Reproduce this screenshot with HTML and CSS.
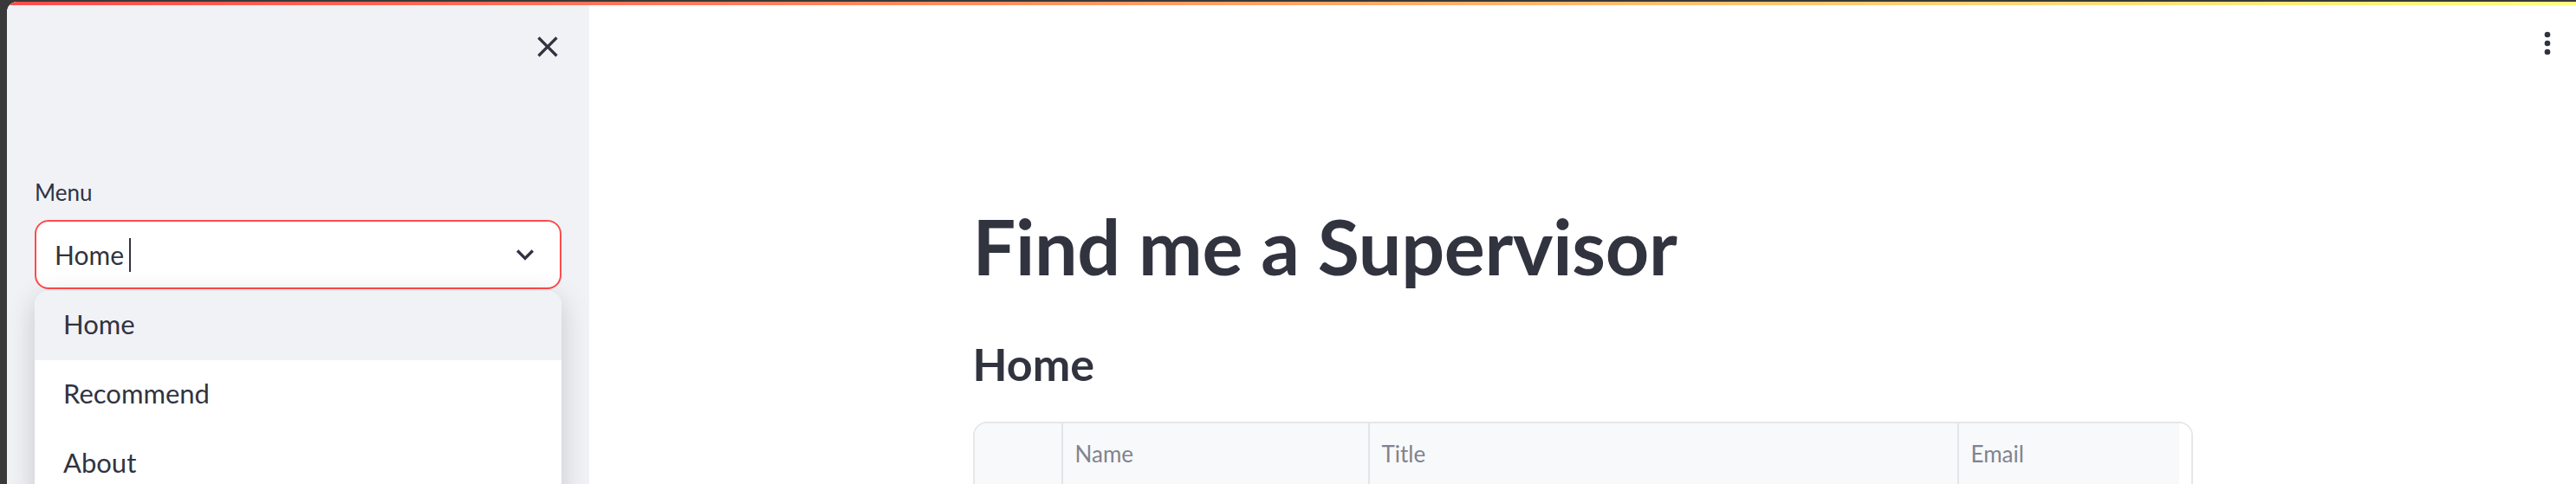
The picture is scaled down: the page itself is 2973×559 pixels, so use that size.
FILE: index.html
```html
<!DOCTYPE html>
<html lang="en">
<head>
<meta charset="utf-8">
<title>Find me a Supervisor</title>
<link rel="stylesheet" href="styles.css">
</head>
<body>
<div class="frame">
  <div class="viewport">
    <div class="decoration"></div>
    <aside class="sidebar">
      <div class="sidebar-header">
        <button class="icon-btn" aria-label="Close sidebar">
          <svg viewBox="0 0 24 24" width="40" height="40"><path fill="#31333f" d="M19 6.41L17.59 5 12 10.59 6.41 5 5 6.41 10.59 12 5 17.59 6.41 19 12 13.41 17.59 19 19 17.59 13.41 12z"/></svg>
        </button>
      </div>
      <div class="sidebar-content">
        <label class="widget-label">Menu</label>
        <div class="select-wrap">
          <div class="select">
            <span class="select-value">Home</span><span class="caret"></span>
            <span class="select-spacer"></span>
            <svg class="chevron" viewBox="0 0 24 24" width="40" height="40"><path fill="#31333f" d="M16.59 8.59L12 13.17 7.41 8.59 6 10l6 6 6-6z"/></svg>
          </div>
          <ul class="dropdown">
            <li class="option active">Home</li>
            <li class="option">Recommend</li>
            <li class="option">About</li>
          </ul>
        </div>
      </div>
    </aside>
    <main class="main">
      <div class="toolbar">
        <button class="icon-btn" aria-label="Main menu">
          <svg viewBox="0 0 24 24" width="40" height="40"><circle cx="12" cy="6" r="2" fill="#31333f"/><circle cx="12" cy="12" r="2" fill="#31333f"/><circle cx="12" cy="18" r="2" fill="#31333f"/></svg>
        </button>
      </div>
      <div class="block">
        <h1 class="title">Find me a Supervisor</h1>
        <h2 class="subtitle">Home</h2>
        <div class="table">
          <div class="thead">
            <div class="th index"></div>
            <div class="th">Name</div>
            <div class="th">Title</div>
            <div class="th">Email</div>
            <div class="th filler"></div>
          </div>
        </div>
      </div>
    </main>
  </div>
</div>
</body>
</html>
```
FILE: styles.css
```css
* { box-sizing: border-box; }
html, body { margin: 0; padding: 0; }
body {
  background: #393939;
  font-family: Lato, "Liberation Sans", sans-serif;
  color: #31333f;
  overflow: hidden;
}
.frame {
  padding: 2px 0 0 8px;
  height: 559px;
}
.viewport {
  position: relative;
  display: flex;
  height: 557px;
  background: #ffffff;
  border-top-left-radius: 12px;
  overflow: hidden;
}
.decoration {
  position: absolute;
  top: 0;
  left: 0;
  right: 0;
  height: 4px;
  background: linear-gradient(90deg, #ff4b4b, #fffd80);
  z-index: 5;
}
.icon-btn {
  width: 40px;
  height: 40px;
  padding: 0;
  border: 0;
  background: transparent;
  display: flex;
}
.sidebar {
  width: 672px;
  flex: 0 0 672px;
  background: #f0f2f6;
  display: flex;
  flex-direction: column;
}
.sidebar-header {
  display: flex;
  justify-content: flex-end;
  padding: 32px 28px 0 0;
}
.sidebar-content {
  padding: 134px 32px 0 32px;
}
.widget-label {
  display: block;
  font-size: 26px;
  line-height: 28px;
  height: 28px;
  margin-bottom: 18px;
  color: #31333f;
}
.select-wrap {
  position: relative;
}
.select {
  display: flex;
  align-items: center;
  height: 80px;
  background: #ffffff;
  border: 2px solid #ff4b4b;
  border-radius: 16px;
  padding: 0 20px 0 21px;
  font-size: 30px;
}
.select-value { line-height: 40px; }
.caret {
  width: 2px;
  height: 39px;
  margin-left: 6px;
  background: #31333f;
}
.select-spacer { flex: 1; }
.chevron { display: block; }
.dropdown {
  position: absolute;
  top: calc(100% + 2px);
  left: 0;
  right: 0;
  margin: 0;
  padding: 0;
  list-style: none;
  background: #ffffff;
  border-radius: 16px 16px 0 0;
  box-shadow: 0 8px 32px rgba(0, 0, 0, 0.18);
  overflow: hidden;
  z-index: 4;
}
.option {
  height: 80px;
  line-height: 76px;
  padding: 0 0 4px 33px;
  font-size: 31px;
  color: #31333f;
}
.option.active { background: #f0f2f6; }
.main {
  flex: 1;
  min-width: 0;
  display: flex;
  flex-direction: column;
}
.toolbar {
  display: flex;
  justify-content: flex-end;
  padding: 28px 13px 0 0;
}
.block {
  width: 100%;
  max-width: 1472px;
  margin: 0 auto;
  padding: 161px 32px 0 32px;
}
.title {
  margin: 0;
  font-size: 88px;
  line-height: 106px;
  font-weight: 700;
  letter-spacing: -0.3px;
  color: #31333f;
}
.subtitle {
  margin: 49px 0 0 0;
  font-size: 52px;
  line-height: 68px;
  font-weight: 700;
  color: #31333f;
}
.table {
  margin-top: 33px;
  height: 200px;
  border: 2px solid #e6e7ea;
  border-radius: 16px;
  overflow: hidden;
}
.thead {
  display: grid;
  grid-template-columns: 100px 354px 680px 256px 1fr;
  height: 70px;
}
.th {
  background: #f8f9fb;
  border-left: 2px solid #e4e5e9;
  padding-left: 14px;
  font-size: 26px;
  line-height: 70px;
  color: #808390;
}
.th.index { border-left: 0; }
.th.filler { background: #ffffff; border-left: 0; }
```
